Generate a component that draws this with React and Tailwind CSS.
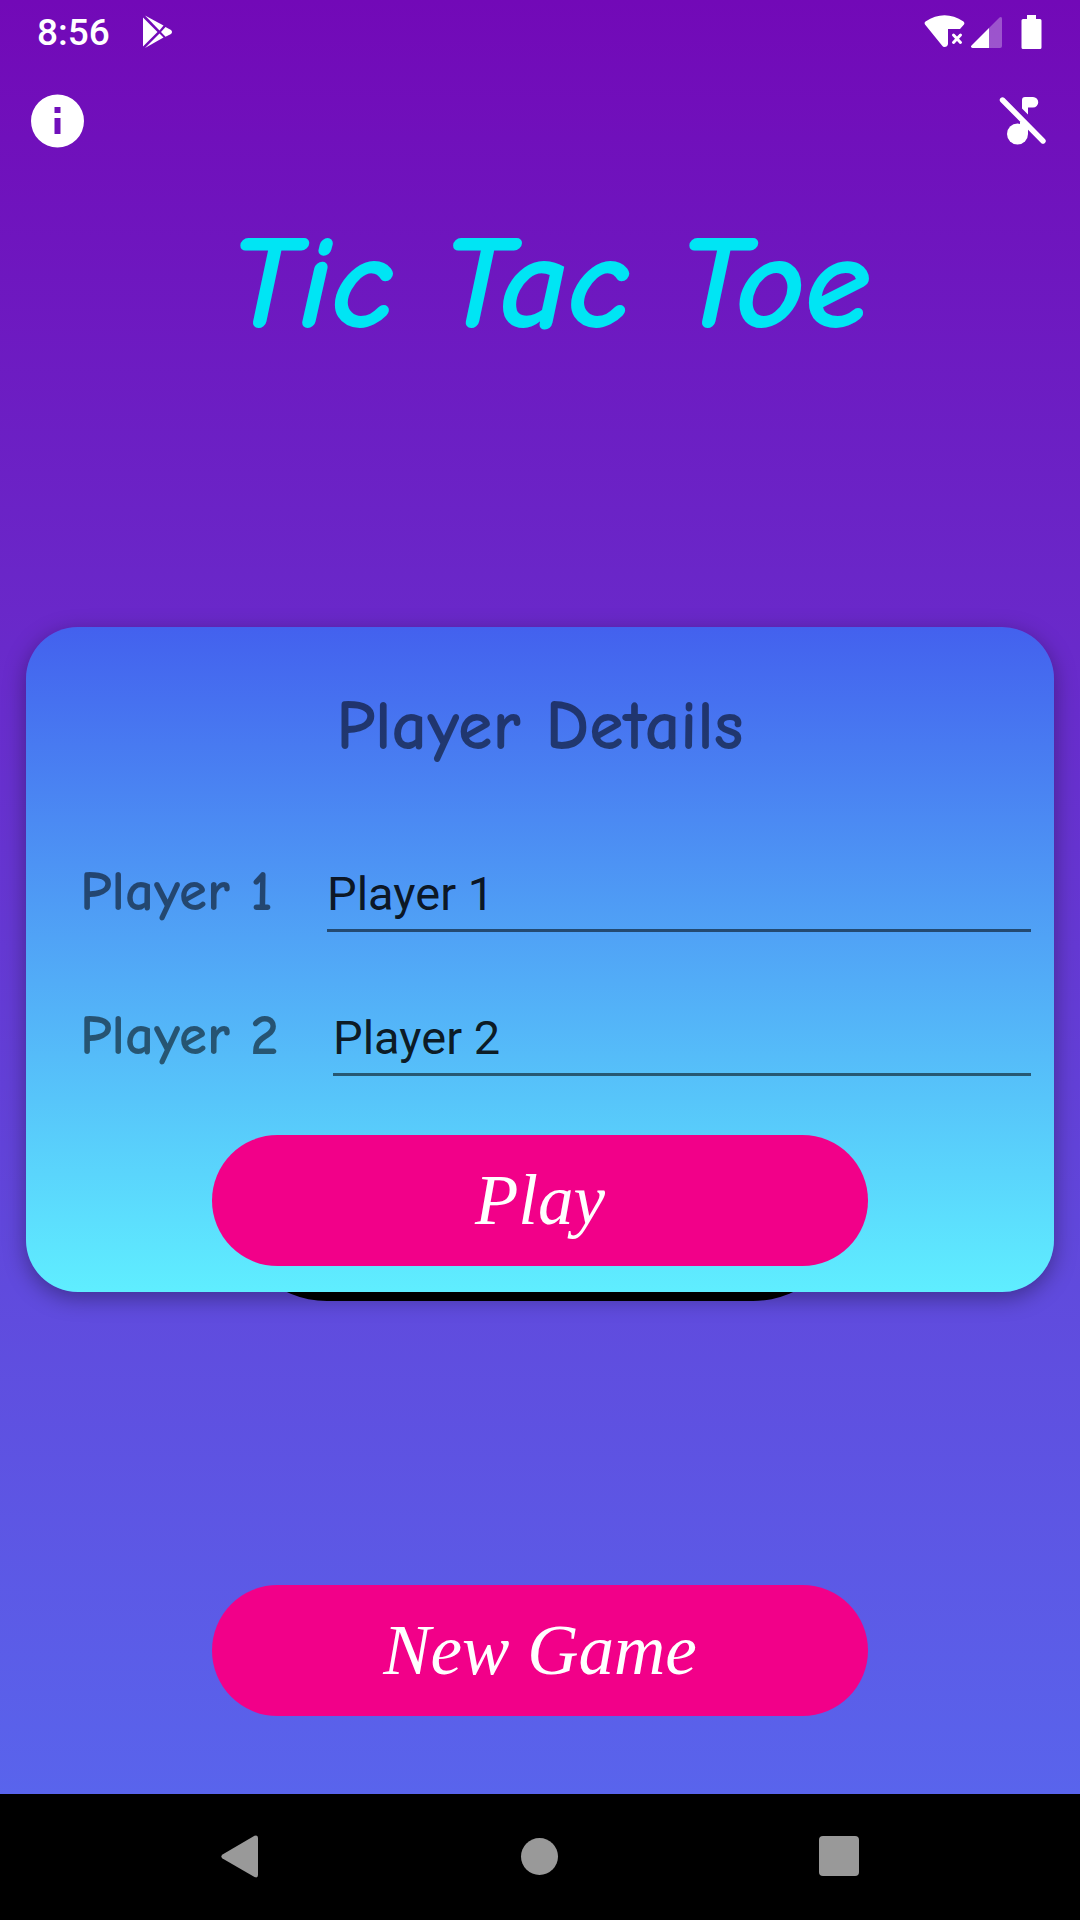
import { useState } from "react";

const comic = "font-['Comic_Sans_MS','Comic_Neue',Lato,sans-serif]";
const script = "font-['Monotype_Corsiva','Liberation_Serif',serif]";

function StatusBar() {
  return (
    <header className="flex h-16 items-center justify-between pr-[38px] pl-[37px] text-white">
      <div className="flex items-center gap-8">
        <span className="pt-0.5 font-[Roboto,sans-serif] text-[37px] leading-[48px] font-medium">8:56</span>
        <svg width="31" height="34" viewBox="142 15 31 34" fill="currentColor" aria-hidden="true">
          <path d="M143 17.5 157.500 32 143 46.500Z" />
          <path d="M145 15.500 163.500 25.500 159.500 30.500Z" />
          <path d="M145 48 163.500 37.500 159.500 33.500Z" />
          <path d="M165.500 27 171 30Q173 32 171 34L165.500 36.800 161 32Z" />
        </svg>
      </div>
      <svg width="119" height="36" viewBox="923 13 119 36" fill="currentColor" aria-hidden="true">
        <path d="M925.500 20.500Q944.500 8 963.500 20.500Q965 22 964 23.500L960 28H948V43Q947.500 46 944.500 46Q943 46 942 44.500L925 23.500Q924 21.500 925.500 20.500Z" />
        <path d="m953.500 34 7 7.500m0-7.500-7 7.500" stroke="currentColor" strokeWidth="3" strokeLinecap="round" />
        <path d="M989 27V47H972.500Q970 46 971.500 44.500Z" />
        <path d="M989 27 999.500 16.500Q1002 15 1002 18V45Q1002 47 1000 47H989Z" opacity=".3" />
        <path d="M1027 14h9v4h4q1.500 0 1.500 1.500v27q0 1.500-1.500 1.500h-17q-1.500 0-1.500-1.500v-27q0-1.500 1.500-1.500h4z" />
      </svg>
    </header>
  );
}

function Toolbar({ muted, onToggle }) {
  return (
    <div className="flex h-28 items-center justify-between pt-px pr-[34px] pl-[31px] text-white">
      <button type="button" aria-label="Information">
        <svg width="53" height="54" viewBox="0 0 53 54" fill="currentColor" aria-hidden="true">
          <path fillRule="evenodd" d="M26.500 .5a26.500 26.500 0 1 1 0 53a26.500 26.500 0 0 1 0-53ZM23.500 13v6h6v-6ZM23.500 24v16h6v-16Z" />
        </svg>
      </button>
      <button type="button" aria-label="Music off" aria-pressed={muted} onClick={onToggle}>
        <svg width="47" height="50" viewBox="999 96 47 50" fill="currentColor" aria-hidden="true">
          <circle cx="1017.500" cy="134" r="10.500" />
          <path d="M1020 122h8v12h-8z" />
          <path d="M1025 97H1033a5.200 5.200 0 0 1 0 10.500H1028V114.500L1022 108.500V100Q1022 97 1025 97Z" />
          <path d="M1002.500 100 1043 141" stroke="currentColor" strokeWidth="5.400" strokeLinecap="round" />
        </svg>
      </button>
    </div>
  );
}

function PillButton({ children, type = "button" }) {
  return (
    <button
      type={type}
      className={`${script} mx-auto block h-[131px] w-[656px] max-w-full rounded-full bg-[#f20089] text-center text-[71px] leading-[131px] font-medium text-white italic`}
    >
      {children}
    </button>
  );
}

function PlayerField({ id, label, value, onChange, className }) {
  return (
    <div className={`flex items-end gap-8 pr-[23px] pl-[54px] ${className}`}>
      <label htmlFor={id} className={`${comic} pb-2 text-[57px] leading-[64px] font-bold whitespace-nowrap text-black/54`}>
        {label}
      </label>
      <input
        id={id}
        value={value}
        onChange={(e) => onChange(e.target.value)}
        className="ml-auto h-[73px] min-w-0 border-b-[3px] border-black/54 bg-transparent pb-0.5 font-[Roboto,sans-serif] text-[47px] leading-[60px] text-black/87 outline-none"
        style={{ width: id === "player1" ? 704 : 698 }}
      />
    </div>
  );
}

function PlayerCard() {
  const [one, setOne] = useState("Player 1");
  const [two, setTwo] = useState("Player 2");
  return (
    <form
      onSubmit={(e) => e.preventDefault()}
      className="relative rounded-[52px] bg-linear-to-b/srgb from-[#4361ee] to-[#5feeff] pt-14 pb-[26px] shadow-[0_6px_22px_rgba(0,0,0,0.35)]"
    >
      <h2 className={`${comic} text-center text-[70px] leading-[88px] font-bold text-black/54`}>Player Details</h2>
      <PlayerField id="player1" label="Player 1" value={one} onChange={setOne} className="mt-[88px]" />
      <PlayerField id="player2" label="Player 2" value={two} onChange={setTwo} className="mt-[71px] mb-[59px]" />
      <PillButton type="submit">Play</PillButton>
    </form>
  );
}

export default function App() {
  const [muted, setMuted] = useState(true);
  return (
    <div className="flex min-h-screen flex-col bg-black">
      <div className="flex grow flex-col bg-linear-to-b/srgb from-[#7209b7] to-[#5964ec]">
        <StatusBar />
        <Toolbar muted={muted} onToggle={() => setMuted(!muted)} />
        <main className="flex grow flex-col">
          <h1 className={`${comic} mt-8 pl-5 text-center text-[134px] leading-[152px] font-bold text-[#00e5f4] italic`}>
            Tic Tac Toe
          </h1>
          <div className="relative mx-[26px] mt-[267px]">
            <div className="absolute -bottom-[9px] left-1/2 h-[190px] w-[616px] -translate-x-1/2 rounded-full bg-black" />
            <PlayerCard />
          </div>
          <div className="mt-auto pb-[78px]">
            <PillButton>New Game</PillButton>
          </div>
        </main>
      </div>
      <nav className="flex h-[126px] shrink-0 items-center justify-between px-[221px] pb-0.5 text-[#999]">
        <button type="button" aria-label="Back">
          <svg width="38" height="43" viewBox="0 0 38 43" fill="currentColor" aria-hidden="true">
            <path d="M33.500.8Q37 -.5 37 3V40Q37 43.500 33.500 42L1.500 23.500Q-.8 21.500 1.500 19.500Z" />
          </svg>
        </button>
        <button type="button" aria-label="Home" className="size-[37px] rounded-full bg-[#999]" />
        <button type="button" aria-label="Recent apps" className="size-10 rounded-sm bg-[#999]" />
      </nav>
    </div>
  );
}
